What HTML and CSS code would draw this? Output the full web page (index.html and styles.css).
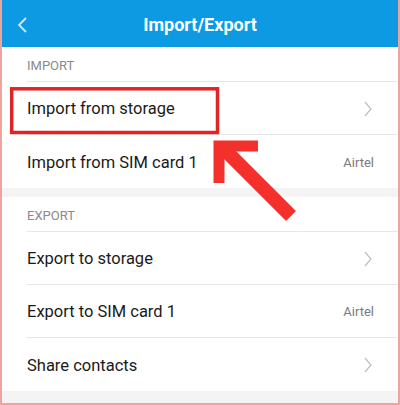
FILE: index.html
```html
<!DOCTYPE html>
<html lang="en">
<head>
    <meta charset="UTF-8">
    <meta name="viewport" content="width=device-width, initial-scale=1.0">
    <title>Import/Export</title>
    <link rel="stylesheet" href="styles.css">
</head>
<body>
    <div class="frame">
        <div class="header">
            <svg class="back" width="12" height="18" viewBox="0 0 12 18">
                <polyline points="9,2 2,9 9,16" fill="none" stroke="#cde8f8" stroke-width="1.8"/>
            </svg>
            <h1>Import/Export</h1>
        </div>

        <div class="group">
            <div class="section-label">IMPORT</div>
            <div class="row">
                <span class="row-title">Import from storage</span>
                <svg class="chevron" width="10" height="16" viewBox="0 0 10 16">
                    <polyline points="2,1 8,8 2,15" fill="none" stroke="#bdbdbd" stroke-width="1.2"/>
                </svg>
            </div>
            <div class="row">
                <span class="row-title">Import from SIM card 1</span>
                <span class="row-value">Airtel</span>
            </div>
        </div>

        <div class="group">
            <div class="section-label">EXPORT</div>
            <div class="row">
                <span class="row-title">Export to storage</span>
                <svg class="chevron" width="10" height="16" viewBox="0 0 10 16">
                    <polyline points="2,1 8,8 2,15" fill="none" stroke="#bdbdbd" stroke-width="1.2"/>
                </svg>
            </div>
            <div class="row">
                <span class="row-title">Export to SIM card 1</span>
                <span class="row-value">Airtel</span>
            </div>
            <div class="row">
                <span class="row-title">Share contacts</span>
                <svg class="chevron" width="10" height="16" viewBox="0 0 10 16">
                    <polyline points="2,1 8,8 2,15" fill="none" stroke="#bdbdbd" stroke-width="1.2"/>
                </svg>
            </div>
        </div>

        <!-- marcação vermelha por cima da tela -->
        <svg class="annotation" width="400" height="405" viewBox="0 0 400 405">
            <rect x="11.7" y="88.8" width="205.8" height="43.7" fill="none" stroke="#de2424" stroke-width="3.5"/>
            <line x1="223" y1="148" x2="291" y2="216" stroke="#f3302b" stroke-width="14"/>
            <polyline points="258,146 219,146 219,183" fill="none" stroke="#f3302b" stroke-width="11" stroke-linejoin="miter"/>
        </svg>
    </div>
</body>
</html>
```

FILE: styles.css
```css
body {
    margin: 0;
    padding: 0;
    font-family: Roboto, "Liberation Sans", sans-serif;
}

.frame {
    position: relative;
    width: 400px;
    height: 405px;
    box-sizing: border-box;
    border-left: 2px solid #eea49c;
    border-right: 2px solid #eea49c;
    border-bottom: 2px solid #eea49c;
    background-color: #f4f4f4;
    overflow: hidden;
}

.header {
    height: 47px;
    box-sizing: border-box;
    padding-top: 2px;
    background-color: #0d9ae2;
    display: flex;
    align-items: center;
    justify-content: center;
    position: relative;
}

.header h1 {
    margin: 0;
    color: #fff;
    font-size: 18px;
    font-weight: bold;
}

.back {
    position: absolute;
    left: 15px;
    top: 16px;
}

.group {
    background-color: #fff;
    margin-bottom: 9px;
}

.section-label {
    height: 35px;
    box-sizing: border-box;
    padding-top: 11px;
    margin-left: 25px;
    font-size: 13px;
    color: #8a8a8a;
    border-bottom: 1px solid #e8e8e8;
}

.row {
    height: 53px;
    box-sizing: border-box;
    margin-left: 25px;
    padding-right: 24px;
    padding-top: 1px;
    display: flex;
    align-items: center;
    justify-content: space-between;
    border-bottom: 1px solid #e8e8e8;
}

.row:last-child {
    border-bottom: none;
}

.row-title {
    font-size: 16.5px;
    color: #1a1a1a;
}

.row-value {
    font-size: 13px;
    color: #7a7a7a;
}

.chevron {
    margin-right: 1px;
}

.annotation {
    position: absolute;
    left: -2px;
    top: 0;
}
```
